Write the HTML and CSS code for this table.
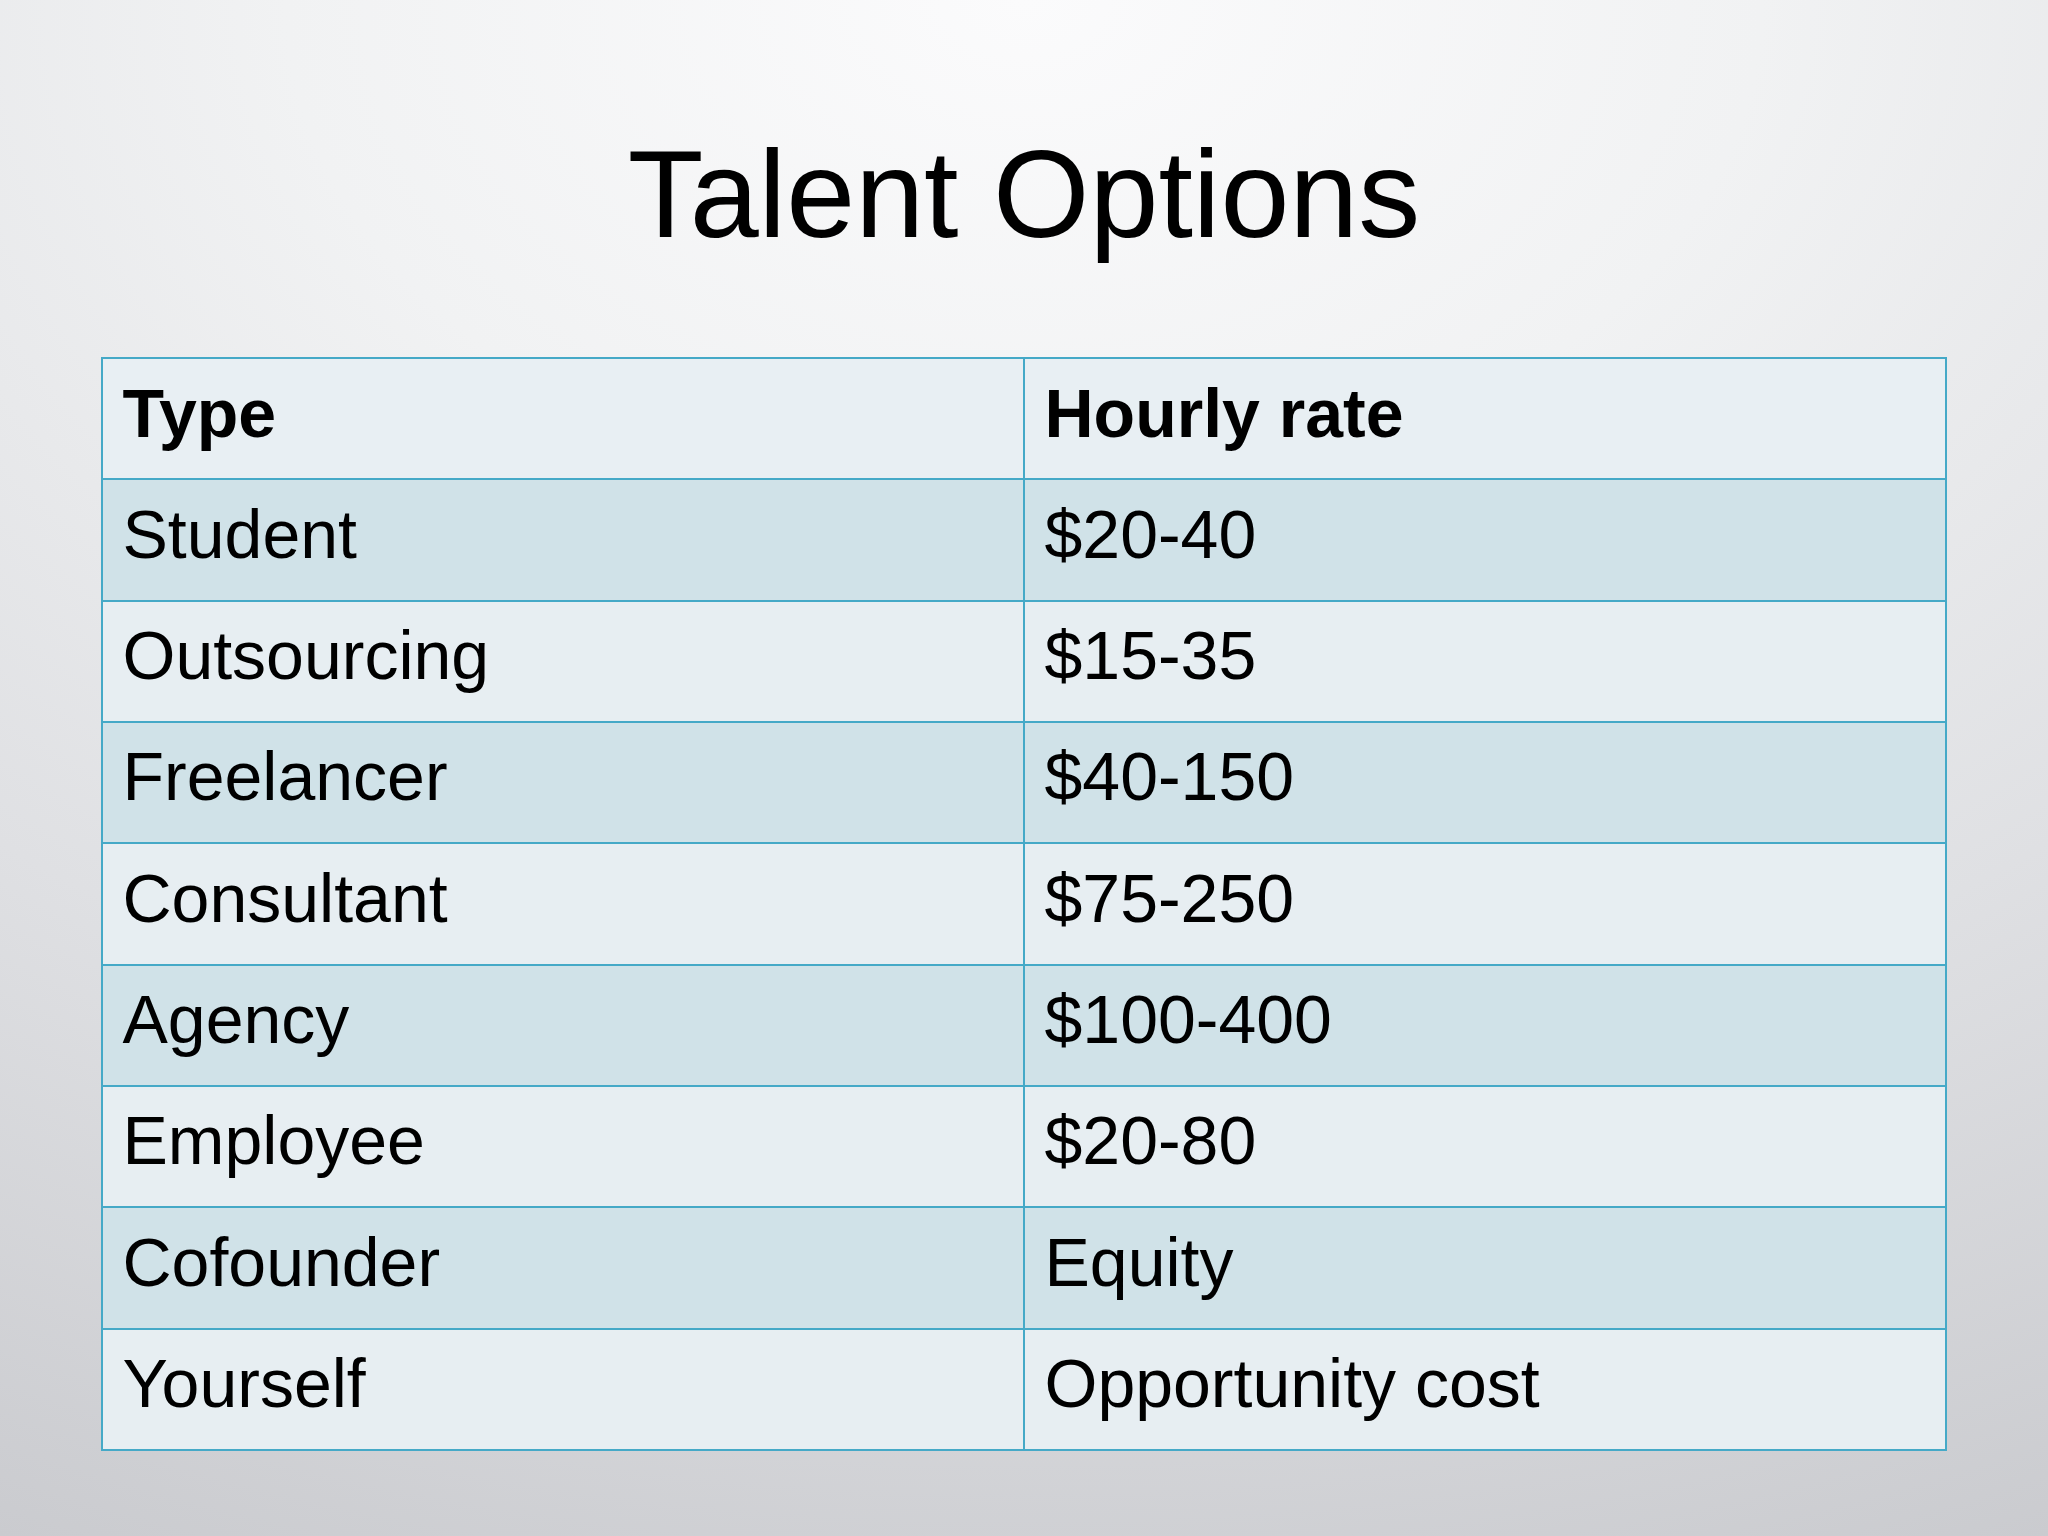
FILE: index.html
```html
<!DOCTYPE html>
<html lang="en">
<head>
<meta charset="utf-8">
<title>Talent Options</title>
<link rel="stylesheet" href="styles.css">
</head>
<body>
<main class="slide">
  <h1 class="title">Talent Options</h1>
  <div class="table">
    <div class="cell head">Type</div>
    <div class="cell head">Hourly rate</div>
    <div class="cell odd">Student</div>
    <div class="cell odd">$20-40</div>
    <div class="cell even">Outsourcing</div>
    <div class="cell even">$15-35</div>
    <div class="cell odd">Freelancer</div>
    <div class="cell odd">$40-150</div>
    <div class="cell even">Consultant</div>
    <div class="cell even">$75-250</div>
    <div class="cell odd">Agency</div>
    <div class="cell odd">$100-400</div>
    <div class="cell even">Employee</div>
    <div class="cell even">$20-80</div>
    <div class="cell odd">Cofounder</div>
    <div class="cell odd">Equity</div>
    <div class="cell even">Yourself</div>
    <div class="cell even">Opportunity cost</div>
  </div>
</main>
</body>
</html>
```
FILE: styles.css
```css
html, body {
  margin: 0;
  padding: 0;
}

body {
  width: 2048px;
  height: 1536px;
  overflow: hidden;
  font-family: "Liberation Sans", Arial, sans-serif;
  color: #000;
  background: radial-gradient(ellipse 120% 110% at 50% 0%, #fbfbfc 0%, #f1f2f3 30%, #dfe0e3 65%, #cacbcf 100%);
}

.slide {
  display: flex;
  flex-direction: column;
  align-items: center;
  padding-top: 132px;
}

.title {
  margin: 0;
  font-weight: normal;
  font-size: 124px;
  line-height: 124px;
}

.table {
  margin-top: 101px;
  display: grid;
  grid-template-columns: 922px 922px;
  grid-auto-rows: 121.333px;
  border-left: 2px solid #45a9c7;
  border-top: 2px solid #45a9c7;
}

.cell {
  box-sizing: border-box;
  border-right: 2px solid #45a9c7;
  border-bottom: 2px solid #45a9c7;
  padding: 19.5px 0 0 19.5px;
  font-size: 68px;
  line-height: 1;
  white-space: nowrap;
}

.head {
  font-weight: bold;
  background: #e8eff3;
}

.odd {
  background: #d0e2e8;
}

.even {
  background: #e7eef2;
}
```
